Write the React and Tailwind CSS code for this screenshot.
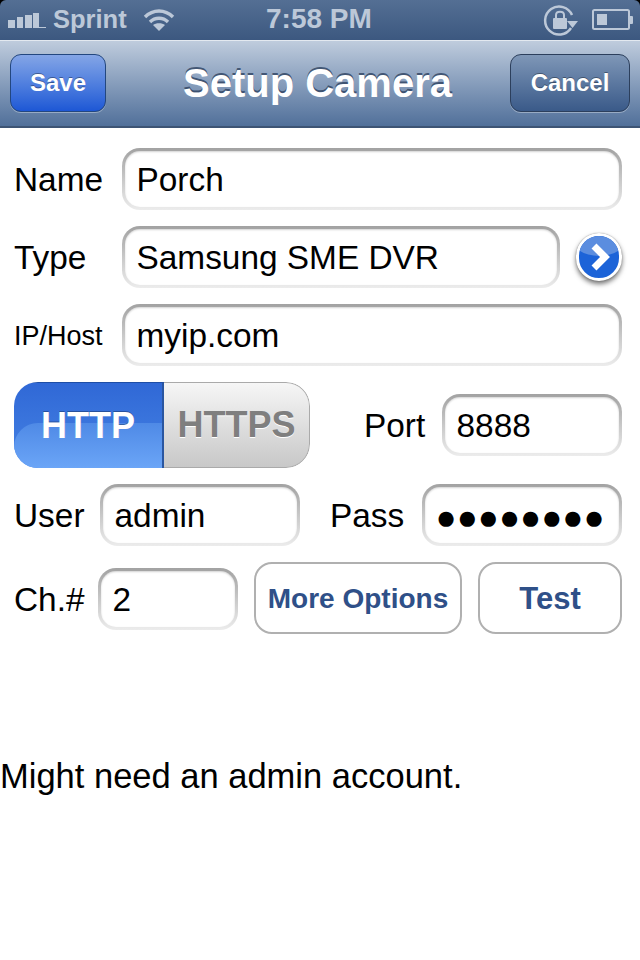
const font = { fontFamily: '"Liberation Sans", Arial, sans-serif' };

function Field({ value, className = "", textClass = "text-[33.4px] pl-[11.500px]" }) {
  return (
    <div className={`h-[62px] shrink-0 p-[3px] rounded-[18px] bg-gradient-to-b from-[#a2a2a2] via-[#c8c8c8] to-[#ececec] ${className}`}>
      <div className={`h-full flex items-center pt-[2px] rounded-[15px] bg-white text-black shadow-[inset_0_1px_2px_rgba(0,0,0,0.18)] ${textClass}`}>
        {value}
      </div>
    </div>
  );
}

function Label({ children, className = "" }) {
  return <div className={`shrink-0 pt-[2px] text-black text-[33.4px] leading-none ${className}`}>{children}</div>;
}

function StatusBar() {
  return (
    <div className="bg-black">
      <div className="relative h-[40px] flex items-center justify-between rounded-t-[6px] bg-gradient-to-b from-[#546f94] to-[#3c5880] text-[#bcc8d8] font-bold">
        <div className="flex items-center pl-[8px]">
          <svg className="mb-[12px]" width="38" height="28" viewBox="0 0 38 28" fill="#bcc8d8">
            <rect x="0" y="20" width="7" height="8" />
            <rect x="9" y="17" width="6" height="11" />
            <rect x="17" y="15" width="7" height="13" />
            <rect x="25" y="13" width="6" height="15" />
            <rect x="31" y="27" width="7" height="1" />
          </svg>
          <span className="ml-[7px] text-[25.500px] leading-none">Sprint</span>
          <svg className="ml-[16px]" width="32" height="24" viewBox="0 0 32 24" fill="none" stroke="#bcc8d8" strokeWidth="3.4">
            <path d="M2 9 C10 1 22 1 30 9" />
            <path d="M7 14 C12 9 20 9 25 14" />
            <path fill="#bcc8d8" stroke="none" d="M16 23 L10 17 C13 14.500 19 14.500 22 17 Z" />
          </svg>
        </div>
        <div className="absolute left-[266px] top-[3px] text-[28px] leading-[32px]">7:58 PM</div>
        <div className="flex items-center pr-[6px]">
          <svg width="36" height="32" viewBox="0 0 36 32" fill="none" stroke="#bcc8d8" strokeWidth="2.500">
            <path d="M29 11 A14 14 0 1 0 28 24" />
            <path fill="#bcc8d8" stroke="none" d="M24 17 L35 17 L29.500 24 Z" />
            <rect fill="#bcc8d8" stroke="none" x="10" y="14" width="14" height="11" rx="1" />
            <path strokeWidth="2" d="M13 14 V11 C13 6.500 21 6.500 21 11 V14" />
          </svg>
          <svg className="ml-[13px]" width="42" height="22" viewBox="0 0 42 22">
            <rect x="1" y="1" width="36" height="19" rx="1.500" fill="none" stroke="#bcc8d8" strokeWidth="2" />
            <rect x="5" y="5" width="10" height="11" fill="#bcc8d8" />
            <rect x="37" y="7" width="4" height="8" rx="1" fill="#bcc8d8" />
          </svg>
        </div>
      </div>
    </div>
  );
}

function NavBar() {
  return (
    <div className="h-[88px] flex items-center justify-between px-[10px] pb-[1px] border-t border-t-[#e3e9f0] border-b-2 border-b-[#3d5474] bg-gradient-to-b from-[#bfccdd] to-[#51709a]">
      <button className="w-[96px] h-[58px] rounded-[11px] border border-[#23477f] text-white font-bold text-[24px] bg-gradient-to-b from-[#84a5e6] to-[#1d57d5] shadow-[0_1px_0_rgba(255,255,255,0.35)] [text-shadow:0_-1px_0_rgba(0,0,0,0.35)]">
        Save
      </button>
      <div className="ml-[19px] text-white font-bold text-[40px] leading-none [text-shadow:0_-2px_0_rgba(40,60,90,0.75)]">Setup Camera</div>
      <button className="w-[120px] h-[58px] rounded-[11px] border border-[#2c3f5c] text-white font-bold text-[24px] bg-gradient-to-b from-[#7f97b7] to-[#3a5a89] shadow-[0_1px_0_rgba(255,255,255,0.35)] [text-shadow:0_-1px_0_rgba(0,0,0,0.35)]">
        Cancel
      </button>
    </div>
  );
}

function Segmented() {
  return (
    <div className="w-[296px] h-[86px] shrink-0 flex rounded-[24px] overflow-hidden font-bold text-[36px] leading-none">
      <div className="relative w-[150px] flex items-center justify-center text-white bg-gradient-to-b from-[#3068d6] to-[#4683e4] border-r-2 border-r-[#2a56a0] border-t border-t-[#1e4ea6] [text-shadow:0_-1px_0_rgba(0,0,0,0.3)]">
        <div className="absolute left-0 right-0 bottom-0 h-[45px] rounded-tl-[24px] bg-gradient-to-b from-[#4f8ae6] to-[#6ba5f7]" />
        <span className="relative">HTTP</span>
      </div>
      <div className="flex-1 flex items-center justify-center text-[#7f7f7f] bg-gradient-to-b from-[#f6f6f6] to-[#c8c8c8] border border-l-0 border-[#aaaaaa] rounded-r-[24px] [text-shadow:0_1px_0_#ffffff]">
        HTTPS
      </div>
    </div>
  );
}

function OutlineButton({ children, className = "" }) {
  return (
    <button className={`h-[72px] shrink-0 pt-[2px] rounded-[18px] border-2 border-[#b0b0b0] bg-white text-[#2f5088] font-bold ${className}`}>
      {children}
    </button>
  );
}

export default function App() {
  return (
    <div className="w-[640px] h-[960px] bg-white overflow-hidden" style={font}>
      <StatusBar />
      <NavBar />
      <div className="flex flex-col pt-[20px] pl-[14px] pr-[18px]">
        <div className="flex items-center">
          <Label className="w-[108px]">Name</Label>
          <Field value="Porch" className="w-[500px]" />
        </div>
        <div className="flex items-center mt-[16px]">
          <Label className="w-[108px]">Type</Label>
          <Field value="Samsung SME DVR" className="w-[438px]" />
          <div className="relative ml-[16px] w-[48px] h-[48px] rounded-full overflow-hidden border-[3px] border-white bg-[#1c63d8] flex items-center justify-center shadow-[0_3px_5px_rgba(0,0,0,0.55),0_0_1px_rgba(0,0,0,0.5)]">
            <div className="absolute -left-[8px] -right-[8px] -top-[18px] h-[38px] rounded-[50%] bg-[#5b8ddf]" />
            <svg className="relative" width="22" height="28" viewBox="0 0 22 28" fill="none" stroke="white" strokeWidth="7">
              <path d="M6 3 L17 14 L6 25" />
            </svg>
          </div>
        </div>
        <div className="flex items-center mt-[16px]">
          <Label className="w-[108px] !text-[27px]">IP/Host</Label>
          <Field value="myip.com" className="w-[500px]" />
        </div>
        <div className="flex items-center mt-[16px]">
          <Segmented />
          <Label className="ml-[54px] w-[78px]">Port</Label>
          <Field value="8888" className="w-[180px]" />
        </div>
        <div className="flex items-center mt-[16px]">
          <Label className="w-[86px]">User</Label>
          <Field value="admin" className="w-[200px]" />
          <Label className="ml-[30px] w-[92px]">Pass</Label>
          <Field value="●●●●●●●●" className="w-[200px]" textClass="text-[35px] leading-none pl-[10.500px]" />
        </div>
        <div className="flex items-start mt-[16px]">
          <Label className="w-[84px] mt-[19px]">Ch.#</Label>
          <Field value="2" className="w-[140px] mt-[6px]" />
          <OutlineButton className="ml-[16px] w-[208px] text-[28px]">More Options</OutlineButton>
          <OutlineButton className="ml-[16px] w-[144px] text-[31px]">Test</OutlineButton>
        </div>
      </div>
      <div className="mt-[122px] text-[34.500px] leading-[40px] text-black">Might need an admin account.</div>
    </div>
  );
}
